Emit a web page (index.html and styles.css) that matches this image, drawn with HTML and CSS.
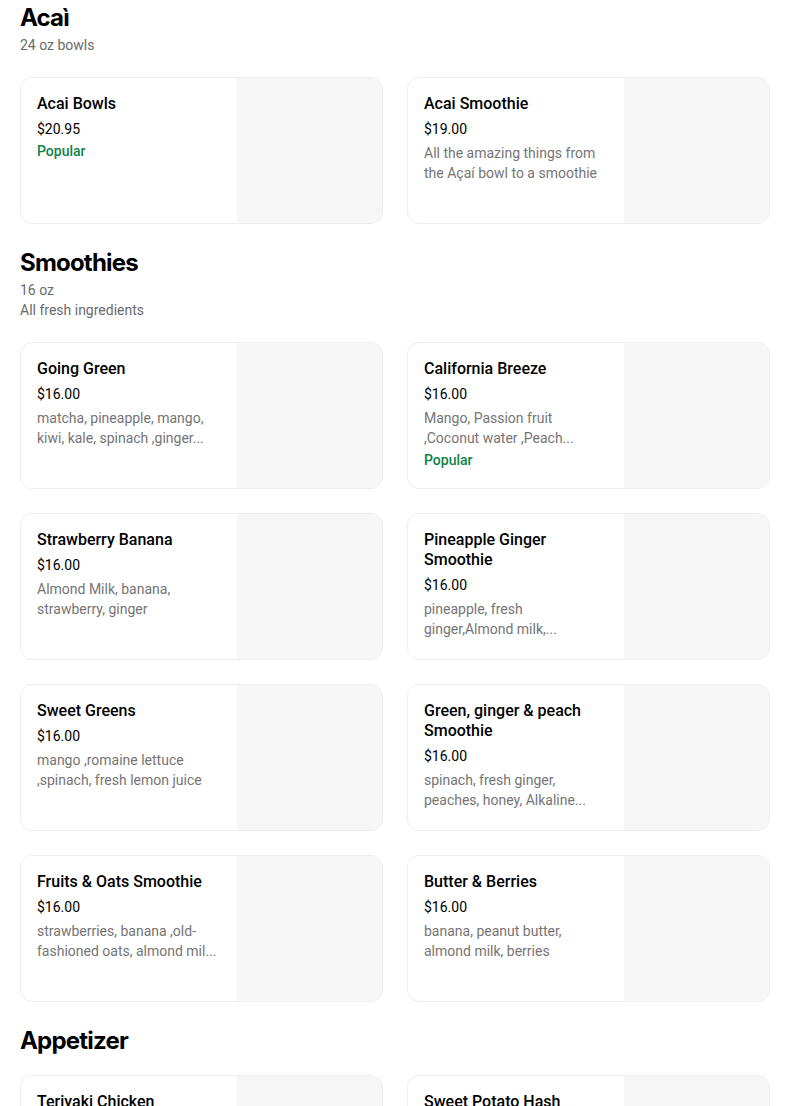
FILE: index.html
```html
<!DOCTYPE html>
<html>
<head>
<meta charset="utf-8">
<title>Menu</title>
<link rel="stylesheet" href="styles.css">
</head>
<body>
<div class="menu">

    <section class="category">
        <div class="category-head">
            <h2>Acaì</h2>
            <p class="category-note">24 oz bowls</p>
        </div>
        <div class="items">
            <div class="item">
                <div class="item-info">
                    <h3 class="item-name">Acai Bowls</h3>
                    <p class="item-price">$20.95</p>
                    <p class="item-tag">Popular</p>
                </div>
                <div class="item-photo"></div>
            </div>
            <div class="item">
                <div class="item-info">
                    <h3 class="item-name">Acai Smoothie</h3>
                    <p class="item-price">$19.00</p>
                    <p class="item-desc">All the amazing things from the Açaí bowl to a smoothie</p>
                </div>
                <div class="item-photo"></div>
            </div>
        </div>
    </section>

    <section class="category">
        <div class="category-head">
            <h2>Smoothies</h2>
            <p class="category-note">16 oz<br>All fresh ingredients</p>
        </div>
        <div class="items">
            <div class="item">
                <div class="item-info">
                    <h3 class="item-name">Going Green</h3>
                    <p class="item-price">$16.00</p>
                    <p class="item-desc">matcha, pineapple, mango, kiwi, kale, spinach ,ginger...</p>
                </div>
                <div class="item-photo"></div>
            </div>
            <div class="item">
                <div class="item-info">
                    <h3 class="item-name">California Breeze</h3>
                    <p class="item-price">$16.00</p>
                    <p class="item-desc">Mango, Passion fruit ,Coconut water ,Peach...</p>
                    <p class="item-tag">Popular</p>
                </div>
                <div class="item-photo"></div>
            </div>
            <div class="item">
                <div class="item-info">
                    <h3 class="item-name">Strawberry Banana</h3>
                    <p class="item-price">$16.00</p>
                    <p class="item-desc">Almond Milk, banana, strawberry, ginger</p>
                </div>
                <div class="item-photo"></div>
            </div>
            <div class="item">
                <div class="item-info">
                    <h3 class="item-name">Pineapple Ginger Smoothie</h3>
                    <p class="item-price">$16.00</p>
                    <p class="item-desc">pineapple, fresh ginger,Almond milk,...</p>
                </div>
                <div class="item-photo"></div>
            </div>
            <div class="item">
                <div class="item-info">
                    <h3 class="item-name">Sweet Greens</h3>
                    <p class="item-price">$16.00</p>
                    <p class="item-desc">mango ,romaine lettuce ,spinach, fresh lemon juice</p>
                </div>
                <div class="item-photo"></div>
            </div>
            <div class="item">
                <div class="item-info">
                    <h3 class="item-name">Green, ginger &amp; peach Smoothie</h3>
                    <p class="item-price">$16.00</p>
                    <p class="item-desc">spinach, fresh ginger, peaches, honey, Alkaline...</p>
                </div>
                <div class="item-photo"></div>
            </div>
            <div class="item">
                <div class="item-info">
                    <h3 class="item-name">Fruits &amp; Oats Smoothie</h3>
                    <p class="item-price">$16.00</p>
                    <p class="item-desc">strawberries, banana ,old-fashioned oats, almond mil...</p>
                </div>
                <div class="item-photo"></div>
            </div>
            <div class="item">
                <div class="item-info">
                    <h3 class="item-name">Butter &amp; Berries</h3>
                    <p class="item-price">$16.00</p>
                    <p class="item-desc">banana, peanut butter, almond milk, berries</p>
                </div>
                <div class="item-photo"></div>
            </div>
        </div>
    </section>

    <section class="category">
        <div class="category-head">
            <h2>Appetizer</h2>
        </div>
        <div class="items">
            <div class="item">
                <div class="item-info">
                    <h3 class="item-name">Teriyaki Chicken</h3>
                    <p class="item-price">$12.00</p>
                </div>
                <div class="item-photo"></div>
            </div>
            <div class="item">
                <div class="item-info">
                    <h3 class="item-name">Sweet Potato Hash</h3>
                    <p class="item-price">$12.00</p>
                </div>
                <div class="item-photo"></div>
            </div>
        </div>
    </section>

</div>
</body>
</html>
```

FILE: styles.css
```css
body {
    margin: 0;
    background: #fff;
    color: #000;
    font-family: Roboto, "Liberation Sans", sans-serif;
}

.menu {
    width: 750px;
    padding: 0 20px;
}

.category {
    margin-bottom: 21px;
}

.category-head {
    padding-bottom: 17px;
}

.category-head h2 {
    margin: 0;
    padding-top: 1px;
    font-family: Inter, "Liberation Sans", sans-serif;
    font-size: 24px;
    font-weight: 700;
    line-height: 34px;
    letter-spacing: -0.8px;
}

.category-note {
    margin: 0;
    padding-bottom: 5px;
    font-size: 14px;
    line-height: 20px;
    color: #6b6b6b;
}

.items {
    display: grid;
    grid-template-columns: 363px 363px;
    gap: 24px;
}

.item {
    display: flex;
    height: 147px;
    box-sizing: border-box;
    border: 1px solid #eeeeee;
    border-radius: 12px;
    overflow: hidden;
}

.item-info {
    flex: 1;
    min-width: 0;
    padding: 16px 16px 0;
}

.item-photo {
    width: 145px;
    flex-shrink: 0;
    background: #f6f6f6;
}

.item-name {
    margin: 0;
    font-size: 16px;
    font-weight: 500;
    line-height: 20px;
}

.item-price {
    margin: 5px 0 0;
    font-size: 14px;
    line-height: 20px;
}

.item-desc {
    margin: 4px 0 0;
    font-size: 14px;
    line-height: 20px;
    color: #757575;
    display: -webkit-box;
    -webkit-line-clamp: 2;
    -webkit-box-orient: vertical;
    overflow: hidden;
}

.item-tag {
    margin: 2px 0 0;
    font-size: 14px;
    font-weight: 500;
    line-height: 20px;
    color: #0e8345;
}
```
